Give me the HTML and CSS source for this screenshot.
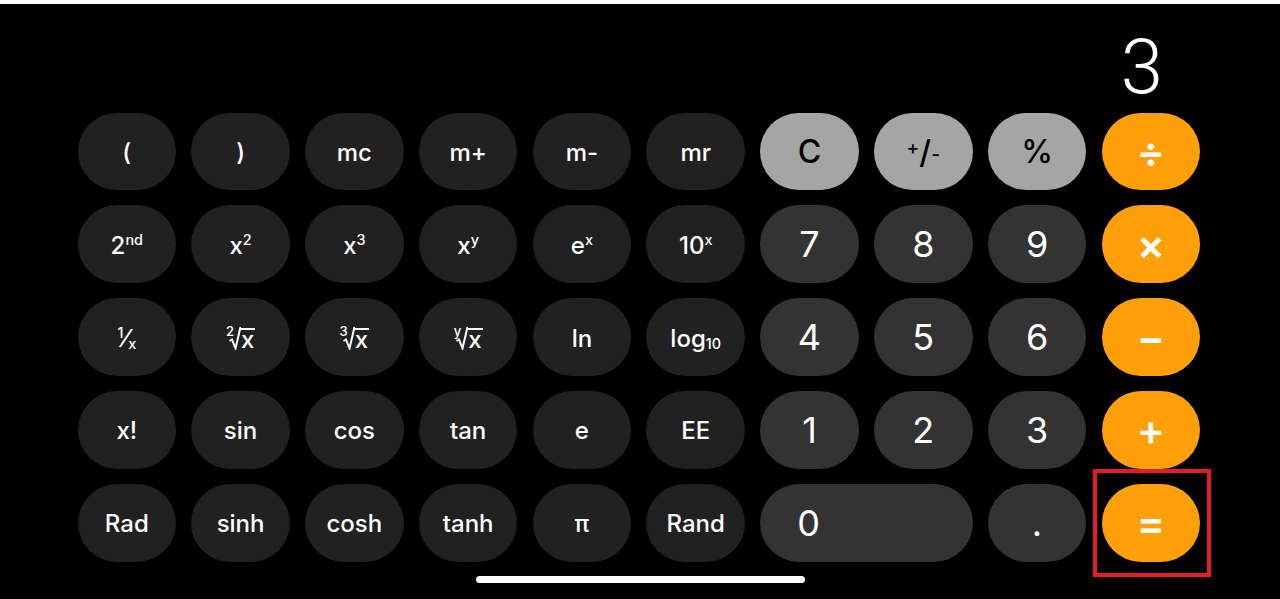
FILE: index.html
```html
<!DOCTYPE html>
<html lang="en">

<head>
    <meta charset="UTF-8">
    <title>Calculator</title>
    <link rel="stylesheet" href="styles.css">
</head>

<body>
    <div class="screen">
        <div class="display">3</div>

        <div class="keypad">
            <!-- row 1 -->
            <button class="key fn">(</button>
            <button class="key fn">)</button>
            <button class="key fn">mc</button>
            <button class="key fn">m+</button>
            <button class="key fn">m-</button>
            <button class="key fn">mr</button>
            <button class="key util">C</button>
            <button class="key util"><span class="sup">+</span>/<span class="sub">-</span></button>
            <button class="key util">%</button>
            <button class="key op">÷</button>

            <!-- row 2 -->
            <button class="key fn">2<span class="sup">nd</span></button>
            <button class="key fn">x<span class="sup">2</span></button>
            <button class="key fn">x<span class="sup">3</span></button>
            <button class="key fn">x<span class="sup">y</span></button>
            <button class="key fn">e<span class="sup">x</span></button>
            <button class="key fn">10<span class="sup">x</span></button>
            <button class="key num">7</button>
            <button class="key num">8</button>
            <button class="key num">9</button>
            <button class="key op">×</button>

            <!-- row 3 -->
            <button class="key fn"><span class="sup">1</span>⁄<span class="sub">x</span></button>
            <button class="key fn">
                <span class="root">
                    <span class="idx">2</span>
                    <svg class="rad" viewBox="0 0 12 24"><path d="M0.5 15 L3 13.5 L6.5 22.5 L11.5 1" /></svg>
                    <span class="over">x</span>
                </span>
            </button>
            <button class="key fn">
                <span class="root">
                    <span class="idx">3</span>
                    <svg class="rad" viewBox="0 0 12 24"><path d="M0.5 15 L3 13.5 L6.5 22.5 L11.5 1" /></svg>
                    <span class="over">x</span>
                </span>
            </button>
            <button class="key fn">
                <span class="root">
                    <span class="idx">y</span>
                    <svg class="rad" viewBox="0 0 12 24"><path d="M0.5 15 L3 13.5 L6.5 22.5 L11.5 1" /></svg>
                    <span class="over">x</span>
                </span>
            </button>
            <button class="key fn">ln</button>
            <button class="key fn">log<span class="sub">10</span></button>
            <button class="key num">4</button>
            <button class="key num">5</button>
            <button class="key num">6</button>
            <button class="key op">−</button>

            <!-- row 4 -->
            <button class="key fn">x!</button>
            <button class="key fn">sin</button>
            <button class="key fn">cos</button>
            <button class="key fn">tan</button>
            <button class="key fn">e</button>
            <button class="key fn">EE</button>
            <button class="key num">1</button>
            <button class="key num">2</button>
            <button class="key num">3</button>
            <button class="key op">+</button>

            <!-- row 5 -->
            <button class="key fn">Rad</button>
            <button class="key fn">sinh</button>
            <button class="key fn">cosh</button>
            <button class="key fn">tanh</button>
            <button class="key fn">π</button>
            <button class="key fn">Rand</button>
            <button class="key num zero">0</button>
            <button class="key num">.</button>
            <button class="key op equals">=</button>
        </div>

        <div class="home-bar"></div>
    </div>
</body>

</html>
```

FILE: styles.css
```css
html {
    background-color: #fff;
}

body {
    margin: 0;
    padding-top: 4px;
    font-family: Inter, "Liberation Sans", sans-serif;
}

.screen {
    position: relative;
    background-color: #000;
    height: 595px;
    overflow: hidden;
}

.display {
    height: 108.5px;
    box-sizing: border-box;
    display: flex;
    justify-content: flex-end;
    align-items: flex-end;
    padding: 0 117px 8px 0;
    color: #fff;
    font-family: Roboto, "Liberation Sans", sans-serif;
    font-weight: 300;
    font-size: 76px;
    line-height: 1;
}

.keypad {
    display: grid;
    grid-template-columns: repeat(10, 98.6px);
    grid-auto-rows: 77.5px;
    column-gap: 15.2px;
    row-gap: 15.4px;
    padding-left: 77.5px;
}

.key {
    border: none;
    border-radius: 39px;
    padding: 0;
    margin: 0;
    color: #fff;
    font-family: Inter, "Liberation Sans", sans-serif;
    display: flex;
    justify-content: center;
    align-items: center;
    cursor: pointer;
}

.fn {
    background-color: #212121;
    font-size: 24px;
    font-weight: 500;
    padding-top: 2px;
}

.num {
    background-color: #333;
    font-size: 36px;
    font-weight: 400;
}

.util {
    background-color: #a5a5a5;
    color: #000;
    font-size: 32px;
    font-weight: 500;
}

.op {
    background-color: #ff9f0a;
    font-size: 42px;
    font-weight: 600;
}

.zero {
    grid-column: span 2;
    justify-content: flex-start;
    padding-left: 37px;
}

.sup {
    font-size: 0.6em;
    align-self: flex-start;
    margin-top: 24px;
}

.sub {
    font-size: 0.6em;
    align-self: flex-end;
    margin-bottom: 24px;
}

.util .sup {
    margin-top: 22px;
}

.util .sub {
    margin-bottom: 24px;
}

/* n-th root: index, drawn radical, barred radicand */
.root {
    display: flex;
    align-items: flex-end;
    height: 24px;
}

.idx {
    font-size: 13px;
    line-height: 13px;
    align-self: flex-start;
    margin-top: -1px;
}

.rad {
    width: 12px;
    height: 24px;
    margin-left: -5px;
    fill: none;
    stroke: #fff;
    stroke-width: 2;
}

.over {
    height: 20px;
    line-height: 20px;
    border-top: 2px solid #fff;
    margin-left: -1px;
    padding: 0 1px;
}

.home-bar {
    width: 329px;
    height: 7px;
    border-radius: 4px;
    background-color: #fff;
    margin: 14px auto 0;
}

/* annotation box around the equals key */
.equals {
    position: relative;
}

.equals::before {
    content: "";
    position: absolute;
    left: -9px;
    top: -15px;
    width: 110px;
    height: 100px;
    border: 4px solid #e51c24;
}
```
